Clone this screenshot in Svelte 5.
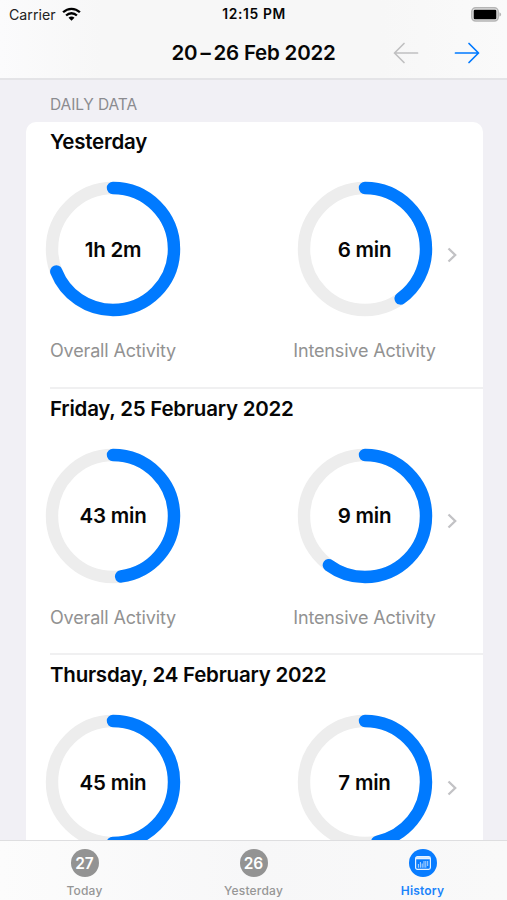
<script>
  const days = [
    { title: 'Yesterday', overall: '1h 2m', overallPart: 62 / 90, intensive: '6 min', intensivePart: 6 / 15, labels: true },
    { title: 'Friday, 25 February 2022', overall: '43 min', overallPart: 43 / 90, intensive: '9 min', intensivePart: 9 / 15, labels: true },
    { title: 'Thursday, 24 February 2022', overall: '45 min', overallPart: 45 / 90, intensive: '7 min', intensivePart: 7 / 15, labels: false }
  ];
  const circumference = 2 * Math.PI * 61;
</script>

{#snippet ring(value, part)}
  <div class="ring">
    <svg width="136" height="136" viewBox="0 0 136 136">
      <circle cx="68" cy="68" r="61" fill="none" stroke="#ededed" stroke-width="12.4" />
      <circle cx="68" cy="68" r="61" fill="none" stroke="#007aff" stroke-width="12.4" stroke-linecap="round"
        stroke-dasharray="{circumference * part} {circumference}" transform="rotate(-90 68 68)" />
    </svg>
    <span>{value}</span>
  </div>
{/snippet}

<div class="app">
  <header>
    <div class="status">
      <div class="carrier">
        <span>Carrier</span>
        <svg width="19" height="14" viewBox="0 0 19 14" fill="none" stroke="#000" stroke-width="2.3">
          <path d="M1.1 5.3C5.9.6 13.1.6 17.9 5.3" />
          <path d="M4.1 8.5c3.1-3 7.7-3 10.8 0" />
          <path d="M9.5 13.7 6.5 10.7c1.8-1.6 4.2-1.6 6 0z" fill="#000" stroke="none" />
        </svg>
      </div>
      <span class="time">12:15 PM</span>
      <svg class="battery" width="31" height="15" viewBox="0 0 31 15">
        <rect x=".8" y=".8" width="26.4" height="13.2" rx="3.8" fill="#e8e8e8" stroke="#b5b5b5" stroke-width="1.5" />
        <rect x="2.7" y="2.7" width="22.6" height="9.5" rx="1.2" fill="#000" />
        <path d="M28.4 5.2c2.3.8 2.3 3.5 0 4.3z" fill="#b5b5b5" />
      </svg>
    </div>
    <div class="nav">
      <h1>20<i>–</i>26 Feb 2022</h1>
      <svg class="back" width="26" height="22" viewBox="0 0 26 22"><path d="M24.5 11H1.5M11 1.5 1.5 11l9.5 9.5" /></svg>
      <svg class="next" width="26" height="22" viewBox="0 0 26 22"><path d="M1.5 11h23M15 1.5l9.5 9.5-9.5 9.5" /></svg>
    </div>
  </header>

  <main>
    <h2>DAILY DATA</h2>
    <section>
      {#each days as day}
        <article>
          <h3>{day.title}</h3>
          <div class="row">
            <div class="metric overall">
              {@render ring(day.overall, day.overallPart)}
              {#if day.labels}<p>Overall Activity</p>{/if}
            </div>
            <div class="metric intensive">
              {@render ring(day.intensive, day.intensivePart)}
              {#if day.labels}<p>Intensive Activity</p>{/if}
            </div>
            <svg class="chevron" width="10" height="16" viewBox="0 0 10 16"><path d="m1.5 1.5 6.7 6.5-6.7 6.5" /></svg>
          </div>
        </article>
      {/each}
    </section>
  </main>

  <nav class="tabs">
    <div class="tab"><b>27</b><span>Today</span></div>
    <div class="tab"><b>26</b><span>Yesterday</span></div>
    <div class="tab active">
      <b>
        <svg width="16" height="14" viewBox="0 0 16 14">
          <rect x=".6" y=".6" width="14.8" height="12.8" rx="1.8" fill="none" stroke="#e6f2ff" stroke-width="1.2" />
          <path d="M1 2.2h14" stroke="#e6f2ff" stroke-width="2.2" />
          <path d="M3.4 8v3.7M5.4 6v5.7M7.2 7.5v4.2M9 5v6.7M10.8 5v6.7M12.7 5v5" stroke="#b5d8ff" stroke-width="1" />
        </svg>
      </b>
      <span>History</span>
    </div>
  </nav>
</div>

<style>
  :global(body) { margin: 0; }
  .app {
    width: 507px; height: 900px; display: flex; flex-direction: column; overflow: hidden;
    background: #f1f0f5; color: #060606; font-family: Inter, "Liberation Sans", sans-serif;
  }
  h1, h2, h3, p { margin: 0; font-weight: 600; white-space: nowrap; }
  svg { display: block; flex: none; }
  header {
    box-sizing: border-box; height: 80px; flex: none; border-bottom: 2px solid #e4e4e7;
    background: linear-gradient(90deg, #fbfbfc 0, #f7f7f7 20%, #f7f7f7 75%, #fafafa 100%);
  }
  .status { height: 27px; display: grid; grid-template-columns: 1fr auto 1fr; align-items: center; padding: 0 5px 0 9px; }
  .carrier { display: flex; align-items: center; gap: 6px; font-size: 14.2px; color: #222; }
  .time { font-size: 13.8px; font-weight: 600; line-height: 28px; letter-spacing: .65px; margin-left: -3px; }
  .battery { justify-self: end; }
  .nav { height: 51px; display: flex; align-items: center; }
  h1 { font-size: 20.5px; width: 221px; margin-left: 171.5px; letter-spacing: -.2px; }
  h1 i { font-style: normal; margin: 0 3px 0 3px; }
  .nav path { fill: none; stroke: #c0c0c1; stroke-width: 1.7; stroke-linecap: round; stroke-linejoin: round; }
  .nav .next path { stroke: #007aff; }
  .next { margin-left: 35px; }
  main { flex: 1; min-height: 0; overflow: hidden; padding: 0 24px 0 26px; }
  h2 { height: 42px; line-height: 49px; padding-left: 24px; font-size: 15.5px; letter-spacing: -.1px; font-weight: 400; color: #8b8b90; }
  section { background: #fff; border-radius: 10px; overflow: hidden; }
  article { box-sizing: border-box; height: 266.67px; margin-left: 24px; border-bottom: 2px solid #f0f0f1; }
  h3 { font-size: 20.5px; line-height: 40px; height: 59px; letter-spacing: -.23px; }
  .row { display: flex; align-items: flex-start; }
  .metric { display: flex; flex-direction: column; align-items: center; width: 142px; }
  .overall { margin-left: -8px; }
  .intensive { margin-left: 109.5px; }
  .ring { display: grid; width: 136px; height: 136px; place-items: center; }
  .ring > * { grid-area: 1 / 1; }
  .ring span { font-size: 20.5px; font-weight: 600; white-space: nowrap; letter-spacing: -.2px; }
  p { font-size: 18px; line-height: 24px; margin-top: 22px; font-weight: 400; letter-spacing: -.15px; color: #929292; }
  .chevron { margin: 65.5px 0 0 11.5px; }
  .chevron path { fill: none; stroke: #c2c2c5; stroke-width: 2.3; }
  .tabs {
    box-sizing: border-box; height: 60px; flex: none; display: grid; grid-template-columns: repeat(3, 169px);
    border-top: 1px solid #dedee0; background: linear-gradient(90deg, #fcfcfc, #f7f7f8 50%, #f9f9f9);
  }
  .tab { display: flex; flex-direction: column; align-items: center; padding-top: 8px; color: #969696; font-size: 12px; font-weight: 500; letter-spacing: .2px; }
  .tab b { width: 28px; height: 28px; border-radius: 50%; background: #939393; color: #fff; display: grid; place-items: center; font-size: 15.5px; font-weight: 600; letter-spacing: 0; }
  .tab span { line-height: 16px; margin-top: 6px; }
  .active { color: #1b84fb; font-weight: 600; }
  .active b { background: #087cff; }
</style>
